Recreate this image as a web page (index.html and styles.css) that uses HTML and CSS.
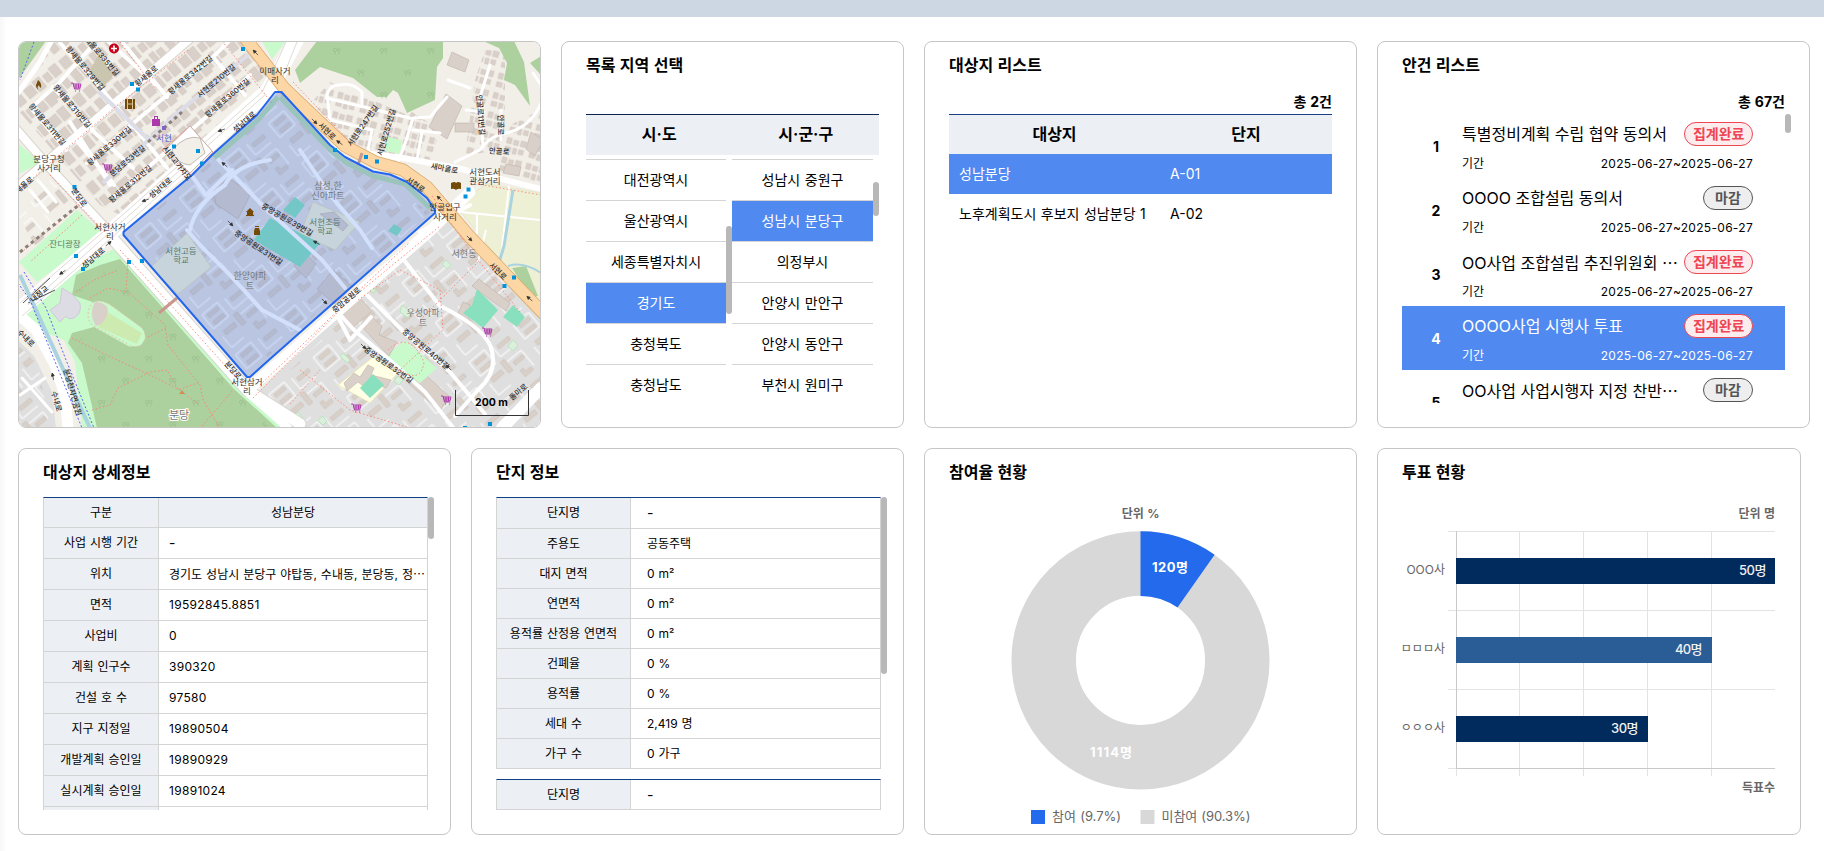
FILE: index.html
```html
<!DOCTYPE html>
<html lang="ko">
<head>
<meta charset="utf-8">
<title>대시보드</title>
<link rel="stylesheet" href="styles.css">
</head>
<body>
<div class="topbar"></div>
<main class="board">
<section class="row">
  <article class="card map-card">
    <svg class="map" viewBox="19 42 521 385" width="521" height="385">
      <defs>
        <pattern id="shops" width="46" height="38" patternUnits="userSpaceOnUse" patternTransform="translate(6 2) rotate(-40)">
          <path fill="#d9d0c9" stroke="#cfc4bb" stroke-width=".4" d="M2 3h10v11h-10zM14 2h9v13h-9zM26 4h7v9h-7zM35 2h9v12h-9zM3 19h8v14h-8zM13 20h13v11h-4v3h-9zM29 18h6v15h-6zM37 20h7v10h-7z"/>
        </pattern>
        <pattern id="slabs" width="58" height="52" patternUnits="userSpaceOnUse" patternTransform="translate(8 0) rotate(-40)">
          <path fill="none" stroke="#fff" stroke-width="1" d="M4 2h20v18h-20zM34 26h18v20M6 32v14h16M32 4v14h20"/>
          <path fill="#d9d0c9" stroke="#c9beb5" stroke-width=".6" d="M8 5h13v4h-13zM8 14h13v4h-13zM36 7h15v4h-15zM28 22h5v14h-5zM10 28h14v5h-14zM38 30h12v4h-12zM38 41h4v4h7v4h-11z"/>
        </pattern>
        <pattern id="houses" width="25" height="20" patternUnits="userSpaceOnUse" patternTransform="rotate(15)">
          <path fill="#d9d0c9" stroke="#cfc4bb" stroke-width=".4" d="M1 1h5v6h-5zM8 2h5v5h-5zM15 1h6v6h-6zM1 10h6v5h-6zM9 10h4v6h-4zM15 10h5v5h-5z"/>
        </pattern>
        <pattern id="trees" width="47" height="44" patternUnits="userSpaceOnUse">
          <g fill="none" stroke="#95bb89" stroke-width=".7"><circle cx="6" cy="6" r="1.600"/><path d="M6 8v2.500M10 10.500V7"/><circle cx="9.600" cy="5.500" r="1.500"/><circle cx="30" cy="28" r="1.600"/><path d="M30 30v2.500M34 32.500V29"/><circle cx="33.600" cy="27.500" r="1.500"/></g>
        </pattern>
        <g id="cart" fill="none" stroke="#ac39ac" stroke-width="1"><path d="M-5-4h2l1.500 6h6M-3-3h8l-1 4h-6M-2.500-1h7M0-3v4M2.500-3v4"/><path d="M-1 4h1M3 4h1"/></g>
        <path id="arrow" d="M-4 0h7M-4 0l3-1.500v3z" stroke="#333" stroke-width=".7" fill="#333"/>
        <path id="stop" d="M-2-2h4v4h-4z" fill="#0092da"/>
      </defs>
      <path fill="#f2efe9" d="M18 41h523v387H18z"/>
      <path fill="url(#shops)" d="M55 41H245L268 78 120 215 100 205 18 110V90z"/>
      <path fill="#e0dfdf" d="M275 92L282 92 330 145 345 157 373 172 390 174 435 211 248 378 123 233 192 175z"/>
      <path fill="#e0dfdf" d="M250 400L452 206 541 318V428H285zM18 340L34 356 52 392 56 428H18z"/>
      <path fill="url(#slabs)" d="M275 98L330 148 373 176 430 212 248 374 128 233 192 179zM262 398L452 212 541 318V428H290zM18 345L38 365 50 428H18zM18 215L50 180 85 208 40 255z"/>
      <path fill="url(#houses)" d="M312 102L330 82 410 116 400 155 352 149zM395 128L412 112 440 130 430 162 400 158zM475 80L485 50H505V150L465 155zM500 130L541 110V185L500 178z"/>
      <g fill="#d9d0c9" stroke="#bfb2a6" stroke-width=".6">
        <path d="M452 52l17 8-4 12-18-7zM446 94l16 12-15 33-18-12zM455 123h19v9h-19zM506 164l15 3-2 9-16-3zM531 132l12 8-8 16-9-7zM342 314l18-16 12 13-19 16zM420 370l29 26-9 15-32-28zM463 302l7 3-1 16-11-8zM479 279l31 24-4 8-34-25z"/>
      </g>
      <path fill="#add19e" d="M18 41h28L18 80zM317 41H443V58L437 67 435 100 407 113 398 93 393 90 387 97H377L353 78 320 67 300 83 295 70zM483 41H514L524 62 530 106 515 85 504 80 507 63 499 48zM530 63l11-7v19z"/>
      <path fill="url(#trees)" d="M317 41H443V58L435 100 407 113 377 97 320 67z"/>
      <path fill="#c8facc" d="M18 143L41 163 18 174zM77 210L103 233 37 282 19 262zM117 247L240 388 282 428H82L75 362 64 340 20 322 36 303 72 272zM387 137l15 3-2 14-15-3zM405 340L437 368 420 383 385 357zM262 41h24l-14 18z"/>
      <path fill="#add19e" d="M120 259L233 388 277 428H97L82 363 68 343 72 333 94 327 130 347 146 338 110 308 72 295 76 275 100 265z"/>
      <path fill="url(#trees)" d="M120 262L233 388 270 428H97L82 363 72 343 96 330 132 350 150 338 112 303 76 290z"/>
      <path fill="#c8facc" stroke="#e7bfae" stroke-width="1" stroke-dasharray="2 2" d="M92 303Q100 298 112 306L142 328Q149 337 141 345 133 349 126 343L92 325Q84 316 92 303z"/>
      <path fill="#cdebb0" d="M107 312L142 333 137 344 98 327z"/>
      <path fill="#d9d0c9" d="M95 302q11 0 13 8-2 14-12 16-8-12-1-24z"/>
      <path fill="#dddbe4" stroke="#cfcbd8" d="M62 288L72 294 80 303Q82 314 74 318 68 320 66 316L60 322 50 310 60 303z"/>
      <path fill="#eef0d5" stroke="#dfe0b8" stroke-width=".6" d="M455 205L487 184 541 193V306L500 260z"/>
      <path fill="#add19e" d="M512 268l14-2 12 30-8 1z"/>
      <g fill="none" stroke="#fff" stroke-width="2"><path d="M461 212l80 8M477 214v20M509 186l-8 72M478 262l8-32"/></g>
      <path d="M513 190l-9 56-6 20" fill="none" stroke="#aad3df" stroke-width="3"/>
      <path d="M508 266q15-5 33 7" fill="none" stroke="#aad3df" stroke-width="2"/>
      <path fill="#f0f0d8" stroke="#e0d8a8" stroke-width=".6" d="M187 233L211 267 178 294 151 267zM313 202L360 222 335 250 300 234z"/>
      <path fill="#ffffe5" stroke="#e6dd9c" stroke-width=".6" d="M338 385L373 357 398 373 370 403z"/>
      <path fill="#d9d0c9" stroke="#bfb2a6" stroke-width=".6" d="M344 383l10-10 6 4 8-12 6 3-3 7 20 5-5 8-16-6-8 3-4-3-11 9zM361 324l11-7 10 9-3 9 18 7-8 14-15-16-12-13zM213 190l14-13 24 16-13 26-22-15zM302 250l14 14-10 14-12-12zM334 212l14 13-5 6-13-10-10-7zM333 270l19 16-16 19-19-16z"/>
      <path fill="#88e0be" d="M254 240L270 218 320 243 300 267zM295 197l10 8-10 13-12-8zM477 289l21 21-15 18-20-15 9-8zM513 305l12 12-8 10-14-10zM373 374l11 11-14 13-10-10zM394 224l8 5-5 7-9-5z"/>
      <path fill="#c9c5ae" d="M98 56l16 18-11 14-15-15z"/>
      <g fill="#dcefdc" stroke="#aee3b4" stroke-width=".8"><path d="M402 305l10 7-4 6-8-6zM446 260l5 5-4 4-5-5zM371 287l5 2-2 4-4-2zM343 353l7 7-3 3-7-7zM513 340l5 5-5 6-5-5zM322 416l5 5-4 4-5-4zM398 376l5 4-4 5-5-4zM298 412l5 6-4 2-4-6z"/></g>
      <g fill="none" stroke="#d8d3cd" stroke-linecap="round" stroke-linejoin="round">
        <path stroke-width="10" d="M10 193L192 37"/>
        <path stroke-width="10" d="M10 122L50 168 112 235"/>
        <path stroke-width="13" d="M112 238L247 390 300 424"/>
      </g>
      <g fill="none" stroke="#fff" stroke-linecap="round" stroke-linejoin="round">
        <g stroke-width="4">
          <path d="M87 163L137 120 213 57 232 38M115 196L205 118 250 75M32 107L60 82 92 46M60 43L100 87 133 127M53 87L92 128M31 108L66 150M70 122L110 185M123 43L167 97M213 57L245 95M108 41L155 84M92 130L133 168M76 140l38 45M135 128l32 40"/>
          <path d="M400 255L440 306Q480 325 490 345 500 370 478 390L455 416M362 290L405 333 450 372 485 414M337 311L354 330 392 362 425 392 455 430M336 313L350 340 371 317M420 232L470 205"/>
          <path d="M187 230L200 245 230 275 262 310 300 330M270 160Q235 165 225 185 195 205 190 230M192 176L206 195M213 154L262 205 322 260 345 288M300 150L330 195 360 230 372 248M206 195L232 170"/>
        </g>
        <g stroke-width="3">
          <path d="M330 119L327 95Q330 84 340 85 352 82 362 92V104M326 98L410 118M330 120L372 130 367 155M447 97L430 117 413 118 407 138 397 165M413 130L440 133M422 132L417 160M541 103Q532 125 510 132 490 135 480 150L455 162M483 147L480 97 490 65M533 73L541 85M448 80L470 88M466 110l18 2M501 110v30"/>
          <path d="M20 395L45 378M22 378L52 412M140 200l30-22M38 180l18 22M30 190l18 22"/>
        </g>
        <path stroke-width="8" d="M10 193L192 37M10 122L50 168 112 235"/>
        <path stroke-width="5" d="M53 38L40 62 18 93"/>
        <path stroke-width="6" d="M355 152L403 158 457 168 541 189"/>
        <path stroke-width="11" d="M112 238L247 390 300 424M18 314L36 330 55 365 65 395 68 428M250 388L430 231 470 192"/>
        <path stroke-width="12" d="M502 428L541 388"/>
        <path stroke-width="16" d="M10 318L105 237 268 91 280 70 298 36"/>
        <path stroke-width="8" d="M248 393L288 428"/>
      </g>
      <path d="M103 183L175 115 248 55M152 143L98 91" fill="none" stroke="#dddde8" stroke-width="4"/>
      <g fill="none" stroke="#d7d0ca" stroke-width=".8"><path d="M20 303L110 226 262 92 276 64 286 42M22 316L108 241 196 162M280 84L297 42M28 305L108 234 266 94"/></g>
      <path d="M23 303L50 278M28 303L55 290" stroke="#555" fill="none"/>
      <path fill="none" stroke="#d9a96a" stroke-width="13" d="M245 38L267 66 284 88 345 146 375 162 403 170 427 187 470 237 545 315"/>
      <path fill="none" stroke="#fcd6a4" stroke-width="11.500" d="M245 38L267 66 284 88 345 146 375 162 403 170 427 187 470 237 545 315"/>
      <path fill="none" stroke="#b9dcb2" stroke-width="5" d="M280 97L330 150 345 162 373 176 405 184 430 208M214 158L258 120 278 97"/>
      <g fill="none" stroke="#fa8072" stroke-width=".9" stroke-dasharray="1.500 2.200">
        <path d="M22 188L60 154 120 103 188 50M120 250L180 315 245 388M128 240L200 322M50 175L105 232M82 215L30 262M18 255L80 205M293 82L350 142M432 196L470 250 520 312M253 398L350 300 440 226M358 300L400 270 440 290 443 330 400 370M260 385L410 242M420 320l60-60M541 195l-70-12M300 370l50 40 60 18M290 404l30-34M120 42l36 48M222 41l50 62"/>
        <path stroke-dasharray="none" stroke-width=".7" d="M162 150L190 126 213 152 192 176z"/>
        <path d="M128 258L126 290 165 325 168 345 200 385 203 400 220 428M90 298L108 288 126 292M72 338L100 352 148 374 180 390 198 404M92 410L110 405 118 388 150 372 167 370 178 390 200 382M202 426L233 390M76 292L94 280 118 270M148 337L166 328"/>
        <path d="M388 350Q410 330 424 362 422 378 410 375 395 372 387 360"/>
      </g>
      <path d="M20 275L90 428" fill="none" stroke="#aad3df" stroke-width="4"/>
      <path d="M18 283L30 300 82 428M24 272L46 308 66 360 94 428M34 42L20 80" fill="none" stroke="#5a62f0" stroke-width="1" stroke-dasharray="2 2"/>
      <path d="M148 142L182 112M20 252L80 204" stroke="#8a8078" stroke-width="3" stroke-dasharray="3.500 3.500"/>
      <path fill="#fff" stroke="#b8aaa2" stroke-width=".8" d="M165 150L190 126 212 151 190 173z"/>
      <path fill="#f2efe9" stroke="#b8aaa2" stroke-width=".8" d="M172 150Q186 134 200 138L205 153 190 165Q176 164 172 150z"/>
      <path d="M159 313l18-15M358 165l4-12" stroke="#c9988c" stroke-width="3"/>
      <path fill="#2563eb" fill-opacity=".2" stroke="#2266ee" stroke-width="2" stroke-linejoin="round" d="M275 92H281.500L330 145 345 157 373 171.500 390 174.500 407 182 427 198 435 210V213L270 359 250 377H247L123.500 235V232L192 175 213 154 257 115z"/>
      <use href="#stop" x="243" y="49"/><use href="#stop" x="132" y="84"/><use href="#stop" x="138" y="89.500"/><use href="#stop" x="74.500" y="187"/><use href="#stop" x="174" y="146.500"/><use href="#stop" x="198" y="151"/><use href="#stop" x="202" y="163.500"/><use href="#stop" x="76" y="256"/><use href="#stop" x="83" y="269"/><use href="#stop" x="129" y="262"/><use href="#stop" x="142" y="261"/><use href="#stop" x="335" y="150"/><use href="#stop" x="366" y="157"/><use href="#stop" x="377" y="161.500"/><use href="#stop" x="468.500" y="189.500"/><use href="#stop" x="465.500" y="196.500"/><use href="#stop" x="514" y="277.500"/><use href="#stop" x="504.500" y="286"/><use href="#stop" x="490" y="424"/><use href="#stop" x="465" y="428"/>
      <use href="#cart" x="76" y="87"/><use href="#cart" x="107" y="168"/><use href="#cart" x="487" y="332"/><use href="#cart" x="446" y="400"/><use href="#cart" x="356" y="408"/>
      <circle cx="114" cy="48.500" r="5" fill="#c8001a"/><path d="M111 48.500h6M114 45.500v6" stroke="#fff" stroke-width="1.600"/>
      <path fill="#734a08" d="M38 80q4 3 3 8-2-1-2-3-3 3 0 5-3-1-3-5 1-2 2-5zM125 99h10v10h-10zM451 183q4-2 5 0 2-2 5 0v6q-3-1-5 1-2-2-5-1zM246 216v-1h1v-3h-1l4-4 4 4h-1v3h1v1zM254 231l1-3h4l1 3v4h-6zM255 227h4v-1h-4z"/>
      <path stroke="#f2e4c8" stroke-width=".8" d="M127.500 99v10M132.500 99v10M128 104h4"/>
      <path fill="#ac39ac" d="M152 119h8v7h-8zM154 119v-3h4v3h-1v-2h-2v2z"/><path fill="#8461c4" d="M162 126h4v4h-4z"/>
      <path d="M182 390l3 4h-6z" fill="#d08f55"/>
      <use href="#arrow" transform="translate(146 200) rotate(-20)"/><use href="#arrow" transform="translate(222 130) rotate(-20)"/><use href="#arrow" transform="translate(63 272) rotate(-35)"/><use href="#arrow" transform="translate(108 244) rotate(140)"/><use href="#arrow" transform="translate(53 377) rotate(80)"/><use href="#arrow" transform="translate(256 53) rotate(45)"/><use href="#arrow" transform="translate(314 121) rotate(225)"/><use href="#arrow" transform="translate(340 143) rotate(35)"/><use href="#arrow" transform="translate(440 199) rotate(45)"/><use href="#arrow" transform="translate(469 238) rotate(225)"/><use href="#arrow" transform="translate(530 299) rotate(40)"/><use href="#arrow" transform="translate(363 346) rotate(225)"/><use href="#arrow" transform="translate(449 368) rotate(45)"/><use href="#arrow" transform="translate(324 301) rotate(225)"/><use href="#arrow" transform="translate(317 243) rotate(30)"/><use href="#arrow" transform="translate(225 165) rotate(40)"/><use href="#arrow" transform="translate(230 223) rotate(225)"/>
      <g class="road-name">
        <text transform="translate(83 70) rotate(50)">황새울로329번길</text>
        <text transform="translate(100 58) rotate(50)">새울로335번길</text>
        <text transform="translate(70 108) rotate(50)">황새울로319번길</text>
        <text transform="translate(45 126) rotate(50)">황새울로311번길</text>
        <text transform="translate(148 78) rotate(-40)">황새울로</text>
        <text transform="translate(192 77) rotate(-40)">황새울로342번길</text>
        <text transform="translate(218 83) rotate(-40)">서현로210번길</text>
        <text transform="translate(229 100) rotate(-40)">황새울로360번길</text>
        <text transform="translate(111 148) rotate(-40)">황새울로330번길</text>
        <text transform="translate(129 163) rotate(-40)">분당로53번길</text>
        <text transform="translate(132 186) rotate(-40)">황새울로312번길</text>
        <text transform="translate(26 187) rotate(-40)">새울로</text>
        <text transform="translate(162 190) rotate(-40)">성남대로</text>
        <text transform="translate(246 124) rotate(-40)">성남대로</text>
        <text transform="translate(77 199) rotate(55)">분당로</text>
        <text transform="translate(175 165) rotate(52)">서현고가차도</text>
        <text transform="translate(95 260) rotate(-40)">성남대로</text>
        <text transform="translate(41 296) rotate(-40)">내정교</text>
        <text transform="translate(24 340) rotate(45)">수내로</text>
        <text transform="translate(54 402) rotate(75)">수내로</text>
        <text transform="translate(70 393) rotate(74)">분당천자연공원</text>
        <text transform="translate(231 372) rotate(48)">분당로</text>
        <text transform="translate(325 133) rotate(45)">서현로</text>
        <text transform="translate(414 187) rotate(35)">서현로</text>
        <text transform="translate(496 273) rotate(45)">서현로</text>
        <text transform="translate(365 127) rotate(-55)">서현로247번길</text>
        <text transform="translate(389 133) rotate(-74)">서현로252번길</text>
        <text transform="translate(478 115) rotate(86)">안골로11번길</text>
        <text transform="translate(498 125) rotate(88)">안골로</text>
        <text transform="translate(499 154) rotate(3)">안골로</text>
        <text transform="translate(444 171) rotate(10)">새마을로</text>
        <text transform="translate(286 222) rotate(30)">중앙공원로39번길</text>
        <text transform="translate(257 250) rotate(34)">중앙공원로31번길</text>
        <text transform="translate(348 302) rotate(-40)">중앙공원로</text>
        <text transform="translate(424 351) rotate(40)">중앙공원로40번길</text>
        <text transform="translate(387 367) rotate(35)">중앙공원로32번길</text>
        <text transform="translate(520 394) rotate(-40)">돌마로</text>
      </g>
      <g class="place-name">
        <text x="275" y="74">이매사거</text><text x="275" y="83">리</text>
        <text x="49" y="162">분당구청</text><text x="49" y="171">사거리</text>
        <text x="110" y="230">서현사거</text><text x="110" y="239">리</text>
        <text x="485" y="175">서현도서</text><text x="485" y="184">관삼거리</text>
        <text x="445" y="210">안골입구</text><text x="445" y="220">사거리</text>
        <text x="247" y="385">서현삼거</text><text x="247" y="394">리</text>
        <text x="164" y="141" fill="#4a5bc4">서현</text>
        <g fill="#557a70"><text x="65" y="247">잔디광장</text><text x="181" y="254">서현고등</text><text x="181" y="263">학교</text><text x="325" y="225">서현초등</text><text x="325" y="234">학교</text></g>
        <g class="district"><text x="328" y="189">삼성,한</text><text x="328" y="199">신아파트</text><text x="250" y="279">한양아파</text><text x="250" y="289">트</text><text x="423" y="316">우성아파</text><text x="423" y="326">트</text><text x="464" y="257">서현동</text><text x="179" y="419" class="mountain">분당</text></g>
      </g>
      <path d="M455.500 390v25.500h73V390" fill="none" stroke="#333"/>
      <text x="491.500" y="406" class="scale">200 m</text>
    </svg>
  </article>

  <article class="card region-card">
    <h2>목록 지역 선택</h2>
    <div class="region-head"><span>시·도</span><span>시·군·구</span></div>
    <div class="region-lists">
      <div class="region-list sido">
        <ul><li>대전광역시</li><li>울산광역시</li><li>세종특별자치시</li><li class="on">경기도</li><li>충청북도</li><li>충청남도</li></ul>
        <i class="thumb"></i>
      </div>
      <div class="region-list sigungu">
        <ul><li>성남시 중원구</li><li class="on">성남시 분당구</li><li>의정부시</li><li>안양시 만안구</li><li>안양시 동안구</li><li>부천시 원미구</li></ul>
        <i class="thumb"></i>
      </div>
    </div>
  </article>

  <article class="card">
    <h2>대상지 리스트</h2>
    <p class="count">총 2건</p>
    <div class="site-table">
      <div class="site-row head"><span>대상지</span><span>단지</span></div>
      <div class="site-row on"><span>성남분당</span><span>A-01</span></div>
      <div class="site-row"><span>노후계획도시 후보지 성남분당 1</span><span>A-02</span></div>
    </div>
  </article>

  <article class="card">
    <h2>안건 리스트</h2>
    <p class="count">총 67건</p>
    <div class="scroll agenda">
      <ol>
        <li><b>1</b><div class="item"><div class="line"><span class="name">특별정비계획 수립 협약 동의서</span><em class="badge done">집계완료</em></div><div class="line term"><span>기간</span><span class="num">2025-06-27~2025-06-27</span></div></div></li>
        <li><b>2</b><div class="item"><div class="line"><span class="name">OOOO 조합설립 동의서</span><em class="badge">마감</em></div><div class="line term"><span>기간</span><span class="num">2025-06-27~2025-06-27</span></div></div></li>
        <li><b>3</b><div class="item"><div class="line"><span class="name">OO사업 조합설립 추진위원회 <span class="dots">⋯</span></span><em class="badge done">집계완료</em></div><div class="line term"><span>기간</span><span class="num">2025-06-27~2025-06-27</span></div></div></li>
        <li class="on"><b>4</b><div class="item"><div class="line"><span class="name">OOOO사업 시행사 투표</span><em class="badge done">집계완료</em></div><div class="line term"><span>기간</span><span class="num">2025-06-27~2025-06-27</span></div></div></li>
        <li><b>5</b><div class="item"><div class="line"><span class="name">OO사업 사업시행자 지정 찬반<span class="dots">⋯</span></span><em class="badge">마감</em></div></div></li>
      </ol>
      <i class="thumb"></i>
    </div>
  </article>
</section>

<section class="row">
  <article class="card">
    <h2>대상지 상세정보</h2>
    <div class="scroll detail">
      <dl class="info first">
        <dt>구분</dt><dd class="label">성남분당</dd>
        <dt>사업 시행 기간</dt><dd class="dash">-</dd>
        <dt>위치</dt><dd>경기도 성남시 분당구 야탑동, 수내동, 분당동, 정<span class="dots">⋯</span></dd>
        <dt>면적</dt><dd class="num">19592845.8851</dd>
        <dt>사업비</dt><dd class="num">0</dd>
        <dt>계획 인구수</dt><dd class="num">390320</dd>
        <dt>건설 호 수</dt><dd class="num">97580</dd>
        <dt>지구 지정일</dt><dd class="num">19890504</dd>
        <dt>개발계획 승인일</dt><dd class="num">19890929</dd>
        <dt>실시계획 승인일</dt><dd class="num">19891024</dd>
        <dt></dt><dd></dd>
      </dl>
      <i class="thumb"></i>
    </div>
  </article>

  <article class="card">
    <h2>단지 정보</h2>
    <div class="scroll complex">
      <dl class="info">
        <dt>단지명</dt><dd class="dash">-</dd>
        <dt>주용도</dt><dd>공동주택</dd>
        <dt>대지 면적</dt><dd>0 m²</dd>
        <dt>연면적</dt><dd>0 m²</dd>
        <dt>용적률 산정용 연면적</dt><dd>0 m²</dd>
        <dt>건폐율</dt><dd>0 %</dd>
        <dt>용적률</dt><dd>0 %</dd>
        <dt>세대 수</dt><dd>2,419 명</dd>
        <dt>가구 수</dt><dd>0 가구</dd>
      </dl>
      <dl class="info"><dt>단지명</dt><dd class="dash">-</dd></dl>
      <i class="thumb"></i>
    </div>
  </article>

  <article class="card">
    <h2>참여율 현황</h2>
    <svg class="chart" viewBox="949 485 383 345" width="383" height="345">
      <text x="1140.500" y="518" class="unit" text-anchor="middle">단위 %</text>
      <circle cx="1140.500" cy="660.400" r="96.800" fill="none" stroke="#d8d8d8" stroke-width="64.500"/>
      <path d="M1140.500 531.300A129.100 129.100 0 0 1 1214.600 554.700L1177.500 607.500A64.500 64.500 0 0 0 1140.500 595.900z" fill="#236bec"/>
      <g class="slice-label"><text x="1170" y="572" textLength="36">120명</text><text x="1111" y="757" textLength="42">1114명</text></g>
      <path fill="#236bec" d="M1031 810h14v14h-14z"/><path fill="#d8d8d8" d="M1140.500 810h14v14h-14z"/>
      <g class="legend"><text x="1052" y="821" textLength="69">참여 (9.7%)</text><text x="1161.500" y="821" textLength="89">미참여 (90.3%)</text></g>
    </svg>
  </article>

  <article class="card vote-card">
    <h2>투표 현황</h2>
    <svg class="chart" viewBox="1402 485 374 345" width="374" height="345">
      <g class="unit" text-anchor="end"><text x="1775" y="518">단위 명</text><text x="1775" y="791.500">득표수</text></g>
      <path fill="none" stroke="#e3e3e3" d="M1448 531.500h327M1448 610.500h327M1448 689.500h327M1448 768.500h9M1456.500 769v7M1519.500 531v245M1583.500 531v245M1647.500 531v245M1711.500 531v245"/>
      <path fill="none" stroke="#c9c9c9" d="M1456.500 531v237.500H1775"/>
      <path fill="#002b5c" d="M1456 558h319v26h-319zM1456 716h192v26h-192z"/><path fill="#2a5c96" d="M1456 637h256v26h-256z"/>
      <g class="bar-label"><text x="1766.500" y="575" textLength="27.500">50명</text><text x="1702.500" y="654" textLength="27.500">40명</text><text x="1638.500" y="733" textLength="27.500">30명</text></g>
      <g class="axis"><text x="1445" y="574">OOO사</text><text x="1445" y="653">ㅁㅁㅁ사</text><text x="1445" y="732">ㅇㅇㅇ사</text></g>
    </svg>
  </article>
</section>
</main>
</body>
</html>
```
FILE: styles.css
```css
* { box-sizing: border-box; margin: 0; padding: 0; }
body {
  width: 1824px;
  height: 851px;
  overflow: hidden;
  background: #fff;
  color: #000;
  font-family: Inter, "Noto Sans CJK KR", sans-serif;
  word-spacing: .6px;
}
ul, ol { list-style: none; }
em, i { font-style: normal; }
.topbar { height: 17px; background: #cdd7e3; }
.board {
  display: flex;
  flex-direction: column;
  gap: 20px;
  height: 834px;
  padding: 24px 0 0 18px;
  background: linear-gradient(90deg, #f7f7f7, #fff 7px);
}
.row { display: flex; gap: 20px; height: 387px; }
.card {
  width: 433px;
  height: 387px;
  flex: none;
  padding: 11px 24px 0;
  border: 1px solid #c6c6c6;
  border-radius: 8px;
  background: #fff;
  overflow: hidden;
}
h2 { height: 24px; font-size: 16px; line-height: 24px; font-weight: 700; white-space: nowrap; }
.dots { font-family: "Noto Sans CJK KR", sans-serif; }
.num { letter-spacing: .3px; }
.thumb { position: absolute; right: -6px; width: 6px; border-radius: 3px; background: #b8b8b8; }

/* map */
.map-card { width: 523px; padding: 0; }
.map { display: block; word-spacing: 0; }
.road-name { font-size: 7.5px; fill: #2b2b2b; text-anchor: middle; font-weight: 500; }
.place-name { font-size: 8.5px; fill: #333; text-anchor: middle; }
.district { font-size: 9px; fill: #777; }
.mountain { font-size: 11px; stroke: #fff; stroke-width: 2px; paint-order: stroke; }
.scale { font-size: 10.5px; font-weight: 700; text-anchor: middle; }

/* region picker */
.region-card { width: 343px; }
.region-head {
  display: flex;
  height: 41px;
  margin-top: 37px;
  border-top: 1px solid #0b2550;
  background: #eceff4;
  font-size: 16px;
  font-weight: 700;
  line-height: 39px;
  text-align: center;
}
.region-head span { flex: 1; }
.region-lists { display: flex; gap: 6px; height: 248px; }
.region-list { position: relative; width: 140px; }
.region-list.sigungu { width: 141px; }
.region-list ul { height: 248px; padding-top: 4px; overflow: hidden; }
.region-list li {
  height: 41px;
  border-bottom: 1px solid #d4d4d4;
  font-size: 14px;
  line-height: 40px;
  text-align: center;
}
.region-list li:first-child { height: 42px; border-top: 1px solid #d4d4d4; }
.on { background: #5089ef; color: #fff; }
.sido .thumb { top: 71px; height: 88px; }
.sigungu .thumb { top: 27px; height: 34px; }

/* site list */
.count { height: 24px; margin: 13px 0 0; font-size: 14px; font-weight: 700; line-height: 23px; text-align: right; }
.site-table { border-top: 1px solid #1a3f86; }
.site-row { display: grid; grid-template-columns: 211px 1fr; height: 40px; font-size: 14px; line-height: 40px; white-space: nowrap; }
.site-row span { padding-left: 10px; }
.site-row.head { height: 39px; background: #eceff4; font-size: 16px; font-weight: 700; line-height: 39px; text-align: center; }
.site-row.head span { padding: 0; }

/* agenda */
.scroll { position: relative; }
.agenda ol { height: 289px; overflow: hidden; }
.agenda li { display: flex; height: 64px; }
.agenda b { width: 60px; padding-left: 8px; font-size: 14px; line-height: 65px; text-align: center; }
.item { width: 291px; padding-top: 8px; }
.line { display: flex; justify-content: space-between; height: 24px; line-height: 24px; white-space: nowrap; }
.name { font-size: 16px; word-spacing: 0; }
.line.term { height: 20px; margin-top: 8px; font-size: 12px; line-height: 20px; }
.badge {
  flex: none;
  min-width: 50px;
  height: 24px;
  padding: 0 7.5px;
  border: 1px solid #555;
  border-radius: 12px;
  background: #eee;
  color: #555;
  font-size: 14px;
  font-weight: 700;
  line-height: 22px;
  text-align: center;
}
.badge.done { border-color: #ef4452; background: #fdecee; color: #ef4452; }
.agenda .thumb { top: 0; height: 19px; }

/* info tables */
.detail, .complex { width: 385px; height: 313px; margin-top: 13px; }
.info {
  display: grid;
  grid-template-columns: 134px 1fr;
  border: solid #d4d4d4;
  border-width: 0 1px;
  border-top: 1px solid #0f3f86;
  font-size: 12px;
  line-height: 29px;
  white-space: nowrap;
}
.info dt, .info dd { height: 30px; border-bottom: 1px solid #d4d4d4; }
.info dt { border-right: 1px solid #d4d4d4; background: #eceff4; text-align: center; }
.info dd { padding-left: 16px; }
.info .dash { font-size: 14px; }
.info + .info { margin-top: 10px; }
.complex .info dt:first-child, .complex .info dd:nth-child(2) { height: 31px; }
.complex .info + .info dt:first-child, .complex .info + .info dd:nth-child(2) { height: 30px; }
.info.first { grid-template-columns: 115px 1fr; grid-template-rows: 30px; grid-auto-rows: 31px; height: 313px; overflow: hidden; line-height: 30px; }
.info.first dt, .info.first dd { height: auto; }
.info.first dd { padding-left: 10px; }
.info.first .label { padding: 0; background: #eceff4; text-align: center; }
.detail .thumb { top: 0; height: 42px; }
.complex .thumb { top: 0; height: 177px; }

/* charts */
.vote-card { width: 424px; }
.chart { display: block; margin-top: 1px; overflow: visible; }
.unit { font-size: 12px; font-weight: 700; fill: #666; }
.slice-label { font-size: 13px; font-weight: 700; fill: #fff; text-anchor: middle; }
.legend { font-size: 13px; fill: #666; }
.bar-label { font-size: 13px; font-weight: 500; fill: #f0f0f0; text-anchor: end; }
.axis { font-size: 12px; fill: #666; text-anchor: end; }
```
